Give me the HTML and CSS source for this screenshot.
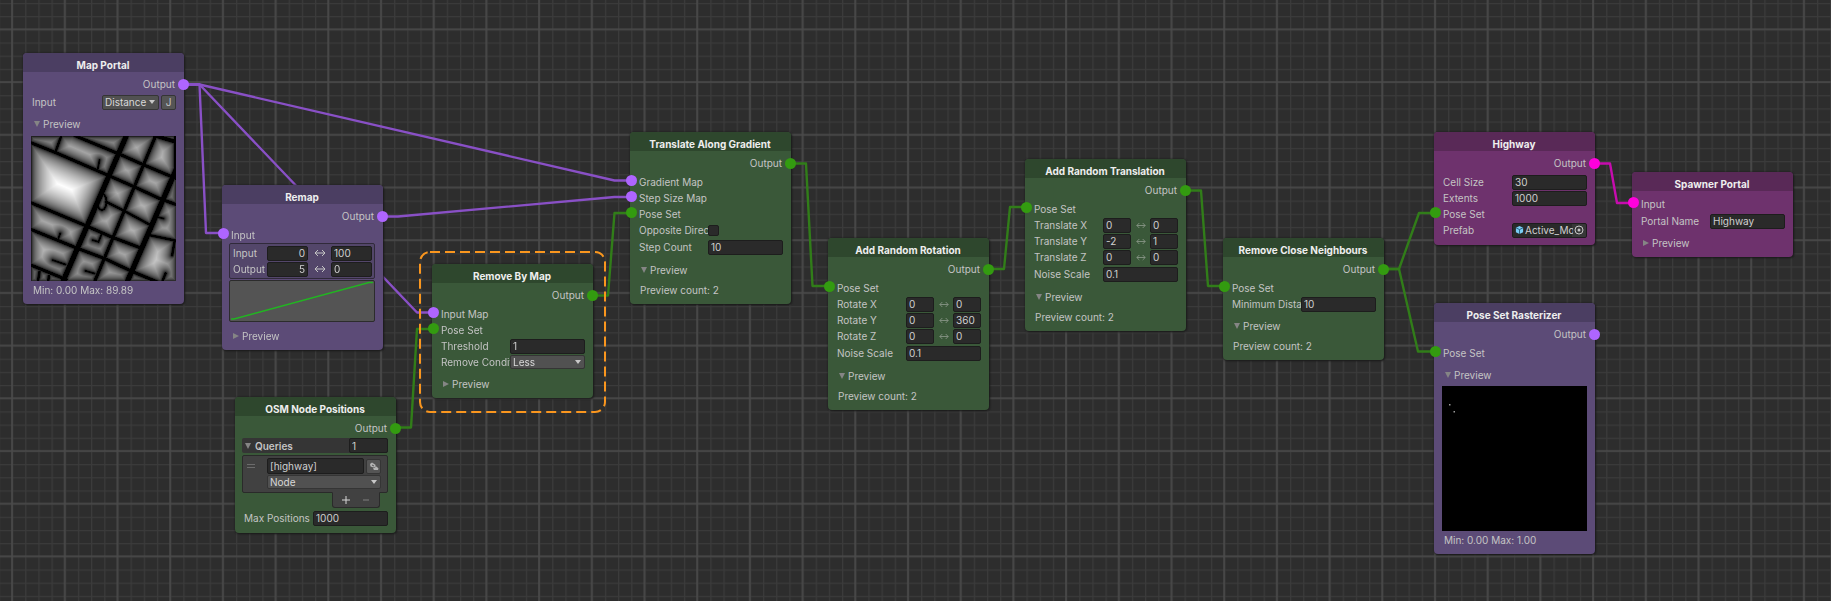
FILE: index.html
```html
<!DOCTYPE html>
<html lang="en">
<head>
<meta charset="utf-8">
<title>Node Graph</title>
<link rel="stylesheet" href="styles.css">
</head>
<body>
<main class="graph">
  <svg class="wires" aria-hidden="true">
    <defs>
      <pattern id="minor" x="12" y="29.3" width="13.175" height="13.175" patternUnits="userSpaceOnUse">
        <path class="line-minor" d="M0.6 0V13.2M0 0.6H13.2"/>
      </pattern>
      <pattern id="major" x="11" y="28.3" width="52.7" height="52.7" patternUnits="userSpaceOnUse">
        <path class="line-major" d="M1 0V52.7M0 1H52.7"/>
      </pattern>
    </defs>
    <rect width="100%" height="100%" fill="url(#minor)"/>
    <rect width="100%" height="100%" fill="url(#major)"/>
    <g class="wire wire-map">
      <path d="M183 84.5H199.5L206 233H223"/>
      <path d="M183 84.5H199.5L614.5 180.5H631"/>
      <path d="M183 84.5H199.5L417 312.5H433"/>
      <path d="M381 216.5H398L614.5 197H631"/>
    </g>
    <g class="wire wire-pose">
      <path d="M394 427.5H411L417 329H433"/>
      <path d="M591 295.5H608L614.5 213H631"/>
      <path d="M790 163.5H806L812.5 286H829"/>
      <path d="M987 269H1004L1010 207H1026"/>
      <path d="M1184 190.500H1201L1208 286H1224"/>
      <path d="M1383 269H1399L1419 213H1435"/>
      <path d="M1383 269H1399L1418 351.500H1435"/>
    </g>
    <g class="wire wire-spawn">
      <path d="M1593 163.500H1610L1617 203H1633"/>
    </g>
  </svg>

  <section class="node map" style="left:23px;top:53px">
    <h2>Map Portal</h2>
    <div class="out">Output<i class="port"></i></div>
    <div class="row lift"><label for="mp-input">Input</label>
      <span class="pick"><span class="select"><select id="mp-input"><option>Distance</option></select></span><button class="small">J</button></span></div>
    <button class="fold open">Preview</button>
    <canvas class="image" id="distance-map" width="145" height="145"></canvas>
    <p>Min: 0.00 Max: 89.89</p>
  </section>

  <section class="node map" style="left:222px;top:185px">
    <h2>Remap</h2>
    <div class="out">Output<i class="port"></i></div>
    <div class="row"><i class="port"></i><span class="label">Input</span></div>
    <div class="ranges">
      <div class="range"><label for="rm-a">Input</label><input class="num" id="rm-a" value="0"><span class="arrow"><svg viewBox="0 0 12 8"><path d="M1 4H11M4 1L1 4L4 7M8 1L11 4L8 7"/></svg></span><input aria-label="Input maximum" value="100"></div>
      <div class="range"><label for="rm-b">Output</label><input class="num" id="rm-b" value="5"><span class="arrow"><svg viewBox="0 0 12 8"><path d="M1 4H11M4 1L1 4L4 7M8 1L11 4L8 7"/></svg></span><input aria-label="Output maximum" value="0"></div>
    </div>
    <svg class="curve" viewBox="0 0 143 40" preserveAspectRatio="none"><path d="M1 38H4L138 1.500H142"/></svg>
    <button class="fold">Preview</button>
  </section>

  <section class="node pose" style="left:235px;top:397px">
    <h2>OSM Node Positions</h2>
    <div class="out">Output<i class="port"></i></div>
    <div class="list">
      <div class="list-head"><button class="fold open">Queries</button><input aria-label="Queries count" value="1"></div>
      <div class="list-item">
        <span class="grip"></span>
        <input aria-label="Query" value="[highway]">
        <button class="small" aria-label="Edit tags"><svg viewBox="0 0 12 12"><path class="tag" d="M2 4L4 2.500L7 4.500L8 6.500L5.500 7.500L2.500 6.500Z"/><path class="tag" d="M5 8.500L8.500 6.500L10.500 8.500L10 10L6 10Z"/><path d="M4 5L6 6"/></svg></button>
        <span class="select wide"><select aria-label="Element type"><option>Node</option></select></span>
      </div>
      <div class="list-foot"><button aria-label="Add"><svg viewBox="0 0 10 10"><path d="M5 1V9M1 5H9"/></svg></button><button aria-label="Remove" class="dim"><svg viewBox="0 0 10 10"><path d="M2 5H8"/></svg></button></div>
    </div>
    <div class="row last"><label for="osm-max">Max Positions Per Query</label><input id="osm-max" value="1000"></div>
  </section>

  <section class="node pose" style="left:432px;top:264px">
    <div class="selection"><svg><rect x="1" y="1" width="185" height="160" rx="10"/></svg></div>
    <h2>Remove By Map</h2>
    <div class="out">Output<i class="port"></i></div>
    <div class="row"><i class="port map-port"></i><span class="label">Input Map</span></div>
    <div class="row"><i class="port"></i><span class="label">Pose Set</span></div>
    <div class="row"><label for="rb-t">Threshold</label><input id="rb-t" value="1"></div>
    <div class="row"><label for="rb-c">Remove Condition</label><span class="select"><select id="rb-c"><option>Less</option></select></span></div>
    <button class="fold">Preview</button>
  </section>

  <section class="node pose" style="left:630px;top:132px">
    <h2>Translate Along Gradient</h2>
    <div class="out">Output<i class="port"></i></div>
    <div class="row"><i class="port map-port"></i><span class="label">Gradient Map</span></div>
    <div class="row"><i class="port map-port"></i><span class="label">Step Size Map</span></div>
    <div class="row"><i class="port"></i><span class="label">Pose Set</span></div>
    <div class="row"><label for="tg-o">Opposite Direction</label><input type="checkbox" id="tg-o"></div>
    <div class="row low"><label for="tg-s">Step Count</label><input id="tg-s" value="10"></div>
    <button class="fold open">Preview</button>
    <p>Preview count: 2</p>
  </section>

  <section class="node pose" style="left:828px;top:238px">
    <h2>Add Random Rotation</h2>
    <div class="out">Output<i class="port"></i></div>
    <div class="row"><i class="port"></i><span class="label">Pose Set</span></div>
    <div class="row"><label for="rr-x">Rotate X</label><span class="pair"><input id="rr-x" value="0"><span class="arrow"><svg viewBox="0 0 12 8"><path d="M1 4H11M4 1L1 4L4 7M8 1L11 4L8 7"/></svg></span><input aria-label="Rotate X maximum" value="0"></span></div>
    <div class="row"><label for="rr-y">Rotate Y</label><span class="pair"><input id="rr-y" value="0"><span class="arrow"><svg viewBox="0 0 12 8"><path d="M1 4H11M4 1L1 4L4 7M8 1L11 4L8 7"/></svg></span><input aria-label="Rotate Y maximum" value="360"></span></div>
    <div class="row"><label for="rr-z">Rotate Z</label><span class="pair"><input id="rr-z" value="0"><span class="arrow"><svg viewBox="0 0 12 8"><path d="M1 4H11M4 1L1 4L4 7M8 1L11 4L8 7"/></svg></span><input aria-label="Rotate Z maximum" value="0"></span></div>
    <div class="row low"><label for="rr-n">Noise Scale</label><input id="rr-n" value="0.1"></div>
    <button class="fold open">Preview</button>
    <p>Preview count: 2</p>
  </section>

  <section class="node pose" style="left:1025px;top:159px">
    <h2>Add Random Translation</h2>
    <div class="out">Output<i class="port"></i></div>
    <div class="row"><i class="port"></i><span class="label">Pose Set</span></div>
    <div class="row"><label for="rt-x">Translate X</label><span class="pair"><input id="rt-x" value="0"><span class="arrow"><svg viewBox="0 0 12 8"><path d="M1 4H11M4 1L1 4L4 7M8 1L11 4L8 7"/></svg></span><input aria-label="Translate X maximum" value="0"></span></div>
    <div class="row"><label for="rt-y">Translate Y</label><span class="pair"><input id="rt-y" value="-2"><span class="arrow"><svg viewBox="0 0 12 8"><path d="M1 4H11M4 1L1 4L4 7M8 1L11 4L8 7"/></svg></span><input aria-label="Translate Y maximum" value="1"></span></div>
    <div class="row"><label for="rt-z">Translate Z</label><span class="pair"><input id="rt-z" value="0"><span class="arrow"><svg viewBox="0 0 12 8"><path d="M1 4H11M4 1L1 4L4 7M8 1L11 4L8 7"/></svg></span><input aria-label="Translate Z maximum" value="0"></span></div>
    <div class="row low"><label for="rt-n">Noise Scale</label><input id="rt-n" value="0.1"></div>
    <button class="fold open">Preview</button>
    <p>Preview count: 2</p>
  </section>

  <section class="node pose" style="left:1223px;top:238px">
    <h2>Remove Close Neighbours</h2>
    <div class="out">Output<i class="port"></i></div>
    <div class="row"><i class="port"></i><span class="label">Pose Set</span></div>
    <div class="row"><label for="rc-m">Minimum Distance</label><input id="rc-m" value="10"></div>
    <button class="fold open">Preview</button>
    <p>Preview count: 2</p>
  </section>

  <section class="node spawn" style="left:1434px;top:132px">
    <h2>Highway</h2>
    <div class="out">Output<i class="port"></i></div>
    <div class="row"><label for="hw-c">Cell Size</label><input id="hw-c" value="30"></div>
    <div class="row"><label for="hw-e">Extents</label><input id="hw-e" value="1000"></div>
    <div class="row"><i class="port pose-port"></i><span class="label">Pose Set</span></div>
    <div class="row last"><span class="label">Prefab</span><button class="object"><svg class="cube" viewBox="0 0 10 10"><path d="M5 0.500L9 2.500V7.500L5 9.500L1 7.500V2.500Z"/><path class="cut" d="M1 2.500L5 4.500L9 2.500M5 4.500V9.500"/></svg><span>Active_Model</span><svg class="target" viewBox="0 0 10 10"><circle cx="5" cy="5" r="4"/><circle class="dot" cx="5" cy="5" r="1.500"/></svg></button></div>
  </section>

  <section class="node spawn" style="left:1632px;top:172px">
    <h2>Spawner Portal</h2>
    <div class="row first"><i class="port"></i><span class="label">Input</span></div>
    <div class="row"><label for="sp-n">Portal Name</label><input id="sp-n" value="Highway"></div>
    <button class="fold">Preview</button>
  </section>

  <section class="node map" style="left:1434px;top:303px">
    <h2>Pose Set Rasterizer</h2>
    <div class="out">Output<i class="port"></i></div>
    <div class="row"><i class="port pose-port"></i><span class="label">Pose Set</span></div>
    <button class="fold open">Preview</button>
    <svg class="image" viewBox="0 0 145 145"><rect width="145" height="145"/><path class="speck" d="M7 18h1.500v1.500H7zM11.500 25H13v1.500H11.500z"/></svg>
    <p>Min: 0.00 Max: 1.00</p>
  </section>
</main>
<script src="map.js"></script>
</body>
</html>
```

FILE: styles.css
```css
* { box-sizing: border-box; }
body { margin: 0; background: #2d2d2d; }
button, input, select, h2, p { font: inherit; color: inherit; margin: 0; padding: 0; border: 0; background: none; }
input { min-width: 0; }

.graph {
  position: relative;
  min-height: 100vh;
  overflow: hidden;
  font: 10px/16px Inter, "Liberation Sans", sans-serif;
  color: #c4c4c4;
}
.wires { position: absolute; inset: 0; width: 100%; height: 100%; }
.line-minor { stroke: #3b3b3b; stroke-width: 1.2; }
.line-major { stroke: #4a4a4a; stroke-width: 1.6; }
.wire { fill: none; stroke-width: 2.4; stroke-linejoin: round; }
.wire-map { stroke: #8950c6; }
.wire-pose { stroke: #317d19; }
.wire-spawn { stroke: #c60cae; }

.node {
  position: absolute;
  display: flex;
  flex-direction: column;
  width: 161px;
  padding-bottom: 4px;
  border-radius: 4px;
  background: var(--body);
  box-shadow: 0 0 2px #1c1c1c, 1px 1px 2px #1c1c1c;
}
.map { --body: #5c4b77; --head: #4b3e62; --port: #ae65ff; }
.pose { --body: #3a5839; --head: #2e472d; --port: #339b10; }
.spawn { --body: #6e326d; --head: #592957; --port: #ff00dc; }
.map-port { --port: #ae65ff; }
.pose-port { --port: #339b10; }

.node h2 {
  height: 19px;
  padding: 4px 1px 0 0;
  border-radius: 4px 4px 0 0;
  background: var(--head);
  color: #eeeeee;
  font-weight: 700;
  line-height: 16px;
  text-align: center;
  white-space: nowrap;
}
.port {
  position: absolute;
  top: 1px;
  left: -4px;
  width: 11px;
  height: 11px;
  border-radius: 50%;
  background: var(--port);
}
.out { position: relative; margin: 3px 0 2px; padding-right: 9px; line-height: 18px; text-align: right; }
.out .port { top: 4px; left: auto; right: -5px; }

.row { position: relative; display: flex; align-items: center; height: 16px; padding: 0 8px 0 9px; }
.row > label, .row > .label { flex: 0 0 69px; overflow: hidden; white-space: nowrap; }
.row > input, .row > .select, .row > .pair, .row > .object { flex: 1; }
.first { margin: 5px 0 1px; }
.last { margin-bottom: 3px; }
.low { margin: 1px 0; }
.lift { margin-top: -1px; }

input:not([type="checkbox"]) {
  height: 15px;
  padding: 0 2px;
  border: 1px solid #1d1d1d;
  border-radius: 2px;
  background: #2a2a2a;
  color: #d0d0d0;
  line-height: 13px;
}
input[type="checkbox"] {
  appearance: none;
  flex: 0 0 11px;
  height: 11px;
  border: 1px solid #1d1d1d;
  border-radius: 2px;
  background: #2a2a2a;
}
input.num { text-align: right; }

.select { position: relative; display: flex; }
.select select {
  appearance: none;
  width: 100%;
  height: 14px;
  padding: 0 2px;
  border: 1px solid #353535;
  border-radius: 2px;
  background: #515151;
  color: #d8d8d8;
  line-height: 12px;
}
.select::after {
  content: "";
  position: absolute;
  top: 5px;
  right: 4px;
  border: 3px solid transparent;
  border-top: 4px solid #c8c8c8;
  border-bottom: 0;
}
.pick { display: flex; gap: 2px; margin-left: auto; }
.pick .select { width: 57px; }
.small {
  display: grid;
  place-items: center;
  width: 15px;
  height: 15px;
  border: 1px solid #353535;
  border-radius: 2px;
  background: #555555;
  line-height: 12px;
}
.pick select { height: 15px; }
.small svg { width: 12px; height: 12px; fill: none; stroke: #555555; }
.small .tag { fill: #b4b4b4; stroke: none; }

.pair { display: flex; }
.pair input { flex: 0 0 28px; }
.arrow { flex: 1; display: grid; place-items: center; }
.arrow svg { width: 10px; height: 7px; fill: none; stroke: #8d998c; }

.fold {
  display: flex;
  align-items: center;
  gap: 3px;
  height: 21px;
  margin-top: 3px;
  padding-left: 11px;
}
.fold::before {
  content: "";
  border: 3px solid transparent;
  border-left: 6px solid #858585;
  border-right: 0;
}
.fold.open::before { border: 3px solid transparent; border-top: 6px solid #858585; border-bottom: 0; }
.node p { padding-left: 10px; line-height: 20px; }
.image { align-self: center; width: 145px; height: 145px; margin: 1px 0 -1px; }
.lift ~ .image { margin-top: 2px; }
.speck { fill: #9a9a9a; }

.ranges {
  display: grid;
  margin: 0 8px 1px 7px;
  padding: 1px 2px 1px 3px;
  border: 1px solid #302a3a;
  border-radius: 2px;
  background: #53466a;
}
.range { display: grid; grid-template-columns: 34px 41px 1fr 41px; height: 16px; align-items: center; }
.range .arrow svg { width: 12px; height: 8px; stroke: #c4c4c4; }
.curve { height: 42px; margin: 0 8px 0 7px; border: 1px solid #2c2c2c; border-radius: 2px; background: #545454; fill: none; stroke: #22b422; stroke-width: 1.4; }

.list { margin: -1px 8px 2px 7px; }
.list-head { display: grid; grid-template-columns: 1fr 39px; height: 15px; border-radius: 2px; background: #353535; }
.list-head .fold { height: 15px; margin: 0; padding-left: 3px; gap: 4px; font-weight: 600; }
.list-item {
  display: grid;
  grid-template-columns: 19px 1fr 15px;
  column-gap: 2px;
  row-gap: 1px;
  align-items: center;
  margin-top: 2px;
  padding: 2px 6px 3px 3px;
  border: 1px solid #2a2a2a;
  border-radius: 2px;
  background: #414141;
}
.list-item input { height: 16px; }
.grip { width: 8px; height: 4px; margin-left: 1px; border: solid #6c6c6c; border-width: 1px 0; }
.wide { grid-column: 2 / 4; }
.list-foot {
  display: flex;
  justify-content: space-evenly;
  width: 48px;
  height: 16px;
  margin: -1px 8px 0 auto;
  border: 1px solid #2a2a2a;
  border-top-color: #414141;
  border-radius: 0 0 3px 3px;
  background: #414141;
}
.list-foot button { display: grid; place-items: center; width: 14px; }
.list-foot svg { width: 10px; height: 10px; stroke: #d8d8d8; }
.list-foot .dim svg { stroke: #808080; }

.selection { position: absolute; inset: -13px; pointer-events: none; }
.selection svg { width: 187px; height: 163px; fill: none; stroke: #fa961e; stroke-width: 2; stroke-dasharray: 10 5; overflow: visible; }

.object {
  display: flex;
  align-items: center;
  gap: 1px;
  height: 15px;
  padding: 0 2px;
  border: 1px solid #1d1d1d;
  border-radius: 2px;
  background: linear-gradient(90deg, #2a2a2a 59px, #383838 59px);
  color: #d0d0d0;
  line-height: 13px;
}
.object span { flex: 1; overflow: hidden; width: 0; text-align: left; white-space: nowrap; }
.cube { flex: 0 0 9px; height: 10px; fill: #79cdf5; }
.cut { fill: none; stroke: #245a74; }
.target { flex: 0 0 10px; height: 10px; fill: none; stroke: #c8c8c8; }
.target .dot { fill: #c8c8c8; stroke: none; }
```

FILE: map.js
```javascript
// Street network as [half width, x, y, x, y, ...] in a 435-unit square.
const streets = [
  [7, 285, 0, 95, 437],
  [4, 373, 0, 190, 437],
  [7, 437, 95, 288, 437],
  [4, 0, 20, 75, 50, 225, 115, 305, 150, 385, 187, 437, 206],
  [4, 130, -2, 265, 54, 335, 85, 437, 128],
  [4, 0, 200, 165, 269, 240, 302, 325, 334],
  [3, 225, 197, 275, 222, 353, 264],
  [4, 0, 280, 135, 335, 220, 367, 305, 407, 385, 440],
  [3, 355, 297, 437, 314],
  [4, 0, 387, 105, 430],
  [3, 90, 0, 73, 47],
  [5, 370, -2, 437, 18],
  [5, 434, 0, 434, 90],
  [2, 205, 72, 200, 97],
  [2, 65, 372, 103, 385],
  [2, 87, 292, 82, 306],
  [2, 213, 290, 202, 317, 185, 312],
  [2, 163, 404, 190, 412],
  [3, 25, 407, 20, 437],
  [3, 53, 420, 51, 437],
  [2, 377, 242, 397, 247],
  [3, 403, 412, 393, 437],
  [3, 430, 317, 423, 357],
  [0, 0, 0, 435, 0, 435, 435, 0, 435, 0, 0]
];
const loop = [2];
for (let a = 0; a <= 12; a++) {
  const t = a * Math.PI / 6;
  loop.push(212 + 14 * Math.cos(t), 197 + 25 * Math.sin(t));
}
streets.push(loop);

function distance(px, py, x1, y1, x2, y2) {
  const dx = x2 - x1, dy = y2 - y1;
  const t = Math.max(0, Math.min(1, ((px - x1) * dx + (py - y1) * dy) / (dx * dx + dy * dy)));
  return Math.hypot(px - x1 - t * dx, py - y1 - t * dy);
}

const canvas = document.getElementById("distance-map");
const context = canvas.getContext("2d");
const size = canvas.width;
const pixels = context.createImageData(size, size);
for (let y = 0; y < size; y++) {
  for (let x = 0; x < size; x++) {
    let nearest = 1000;
    for (const s of streets) {
      for (let i = 1; i + 3 < s.length; i += 2) {
        nearest = Math.min(nearest, distance(x * 3 + 1, y * 3 + 1, s[i], s[i + 1], s[i + 2], s[i + 3]) - s[0]);
      }
    }
    const level = 255 * Math.min(1, Math.pow(Math.max(0, nearest) / 80, 0.47));
    pixels.data.set([level, level, level, 255], (y * size + x) * 4);
  }
}
context.putImageData(pixels, 0, 0);
```
